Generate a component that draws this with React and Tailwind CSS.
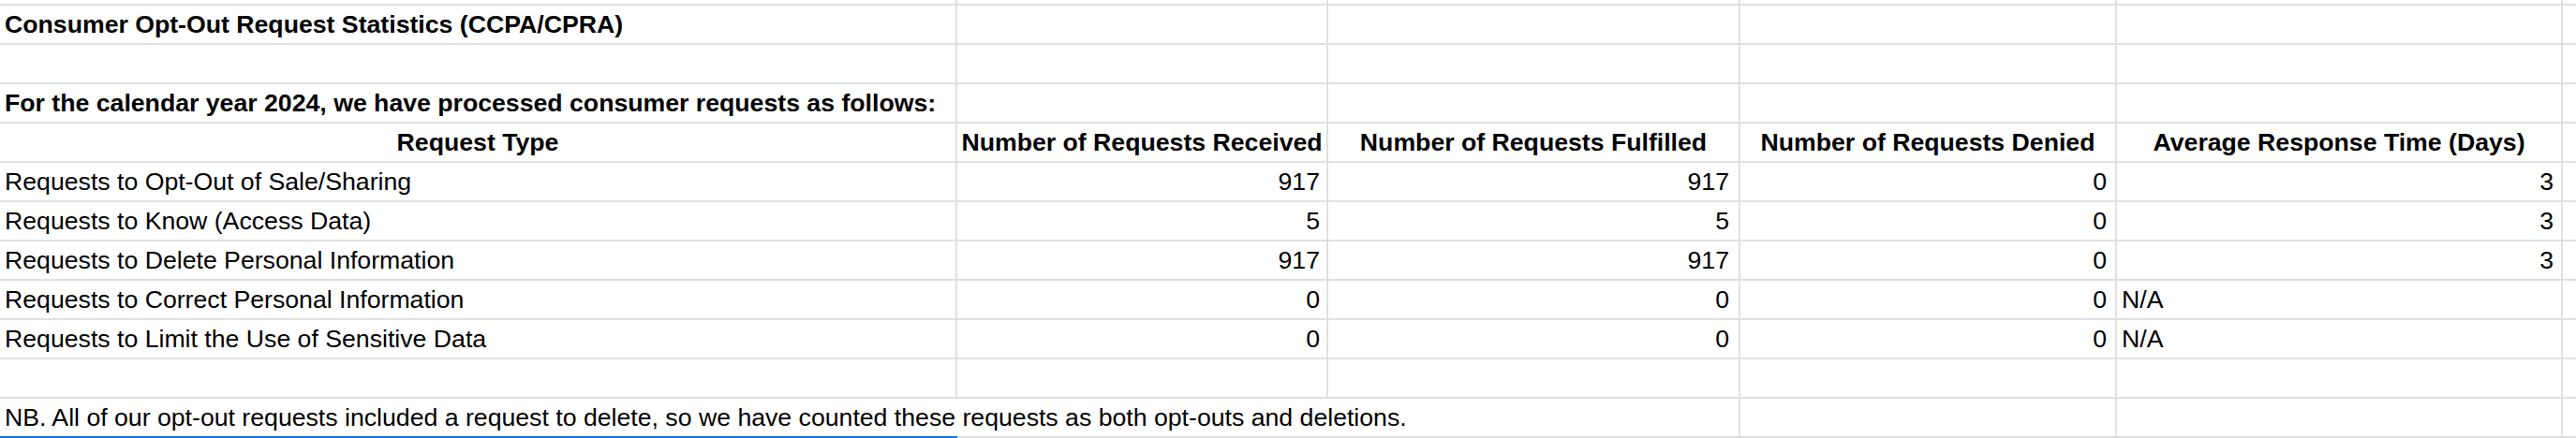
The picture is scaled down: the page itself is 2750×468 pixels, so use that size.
import React from 'react';
import clsx from 'clsx';

const rows = [
  ['Requests to Opt-Out of Sale/Sharing', '917', '917', '0', '3'],
  ['Requests to Know (Access Data)', '5', '5', '0', '3'],
  ['Requests to Delete Personal Information', '917', '917', '0', '3'],
  ['Requests to Correct Personal Information', '0', '0', '0', 'N/A'],
  ['Requests to Limit the Use of Sensitive Data', '0', '0', '0', 'N/A'],
];

const headers = [
  'Request Type',
  'Number of Requests Received',
  'Number of Requests Fulfilled',
  'Number of Requests Denied',
  'Average Response Time (Days)',
];

// right padding per numeric column, as in the sheet
const numPad = ['pr-[7px]', 'pr-[10px]', 'pr-[9px]', 'pr-[8px]'];

function Cell({ children, className, right = true, blue = false, tall = true }) {
  return (
    <div
      className={clsx(
        'flex items-end whitespace-nowrap border-b-2 leading-[26px]',
        tall ? 'h-[42px] pb-[7px]' : 'h-[6px]',
        blue ? 'border-b-[#1a73e8]' : 'border-b-[#e1e1e1]',
        right && 'border-r-2 border-r-[#e1e1e1]',
        className
      )}
    >
      {children}
    </div>
  );
}

function BlankRow() {
  return (
    <>
      <Cell />
      <Cell />
      <Cell />
      <Cell />
      <Cell />
      <Cell right={false} />
    </>
  );
}

export default function App() {
  return (
    <div className="w-[2750px] h-[468px] overflow-hidden bg-white text-black font-['Liberation_Sans',Arial,sans-serif] text-[26.67px]">
      <div className="grid grid-cols-[1022px_396px_440px_402px_476px_1fr]">
        {/* partial row at the top */}
        <Cell tall={false} />
        <Cell tall={false} />
        <Cell tall={false} />
        <Cell tall={false} />
        <Cell tall={false} />
        <Cell tall={false} right={false} />

        {/* title */}
        <Cell className="pl-[5px] font-bold">Consumer Opt-Out Request Statistics (CCPA/CPRA)</Cell>
        <Cell />
        <Cell />
        <Cell />
        <Cell />
        <Cell right={false} />

        <BlankRow />

        <Cell className="pl-[5px] font-bold">For the calendar year 2024, we have processed consumer requests as follows:</Cell>
        <Cell />
        <Cell />
        <Cell />
        <Cell />
        <Cell right={false} />

        {/* table header */}
        {headers.map(h => (
          <Cell key={h} className="justify-center font-bold">{h}</Cell>
        ))}
        <Cell right={false} />

        {rows.map(r => (
          <React.Fragment key={r[0]}>
            <Cell className="pl-[5px]">{r[0]}</Cell>
            {r.slice(1).map((v, i) =>
              v === 'N/A' ? (
                <Cell key={i} className="pl-[5px]">{v}</Cell>
              ) : (
                <Cell key={i} className={clsx('justify-end', numPad[i])}>{v}</Cell>
              )
            )}
            <Cell right={false} />
          </React.Fragment>
        ))}

        <BlankRow />

        {/* note overflows across the first three columns */}
        <Cell right={false} blue className="relative z-10 pl-[5px]">
          NB. All of our opt-out requests included a request to delete, so we have counted these requests as both opt-outs and deletions.
        </Cell>
        <Cell right={false} />
        <Cell />
        <Cell />
        <Cell />
        <Cell right={false} />
      </div>
    </div>
  );
}
